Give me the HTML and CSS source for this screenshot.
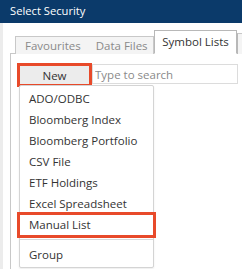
FILE: index.html
```html
<!DOCTYPE html>
<html lang="en">
<head>
  <meta charset="UTF-8">
  <title>Select Security</title>
  <link rel="stylesheet" href="styles.css">
</head>
<body>
  <div class="header">Select Security</div>
  <div class="main">
    <div class="tabs">
      <div class="tab-group">
        <span class="tab">Favourites</span>
        <span class="sep"></span>
        <span class="tab">Data Files</span>
      </div>
      <div class="tab active">Symbol Lists</div>
      <div class="tab-rest"></div>
    </div>
    <div class="panel">
      <div class="toolbar">
        <button class="new-btn">New</button>
        <input class="search" type="text" placeholder="Type to search">
      </div>
      <ul class="menu">
        <li>ADO/ODBC</li>
        <li>Bloomberg Index</li>
        <li>Bloomberg Portfolio</li>
        <li>CSV File</li>
        <li>ETF Holdings</li>
        <li>Excel Spreadsheet</li>
        <li class="marked">Manual List</li>
        <li class="divider"></li>
        <li>Group</li>
      </ul>
    </div>
  </div>
</body>
</html>
```

FILE: styles.css
```css
html, body {
  height: 269px;
  overflow: hidden;
}
body {
  margin: 0;
  font-family: "Open Sans", "Noto Sans", sans-serif;
  font-size: 11.5px;
  color: #333;
  background: #fff;
}
.header {
  background: #0b3a6a;
  color: #fff;
  height: 23px;
  line-height: 22px;
  padding-left: 10px;
  font-size: 11.2px;
  white-space: nowrap;
}
.main {
  box-sizing: border-box;
  border-left: 3px solid #ececec;
  height: 246px;
  padding-left: 7px;
  padding-top: 7px;
}
.tabs {
  display: flex;
  align-items: flex-end;
  margin-left: 5px;
  height: 24px;
  margin-bottom: -1px;
  position: relative;
  z-index: 1;
}
.tab-group {
  display: flex;
  align-items: center;
  background: #f4f4f4;
  border: 1px solid #c8c8c8;
  border-bottom: none;
  height: 17px;
  width: 137px;
  color: #8a8a8a;
  white-space: nowrap;
}
.tab-group .tab {
  padding: 0 6px 0 9px;
}
.sep {
  width: 1px;
  height: 13px;
  background: #c4c4c4;
}
.tab.active {
  background: #fff;
  border: 1px solid #b8b8b8;
  border-bottom: 1px solid #fff;
  height: 22px;
  line-height: 22px;
  width: 81px;
  text-align: center;
  white-space: nowrap;
}
.tab-rest {
  flex: 1;
  height: 20px;
  background: #f4f4f4;
  border-top: 1px solid #c8c8c8;
  border-left: 1px solid #b8b8b8;
}
.panel {
  position: relative;
  box-sizing: border-box;
  border: 1px solid #c8c8c8;
  border-right: none;
  border-bottom: none;
  height: 216px;
  padding: 9px 0 0 6px;
}
.toolbar {
  display: flex;
  align-items: flex-start;
}
.new-btn {
  width: 75px;
  height: 24px;
  box-sizing: border-box;
  border: 3px solid #e84a2a;
  background: #ececec;
  font-family: inherit;
  font-size: 11.5px;
  color: #333;
  padding: 0;
}
.search {
  width: 146px;
  height: 20px;
  box-sizing: border-box;
  margin-top: 1px;
  border: 1px solid #dcdcdc;
  padding: 0 2px;
  font-family: inherit;
  font-size: 11.5px;
}
.search::placeholder {
  color: #8a8a8a;
}
.menu {
  position: absolute;
  left: 8px;
  top: 31px;
  width: 133px;
  margin: 0;
  padding: 2px 0 2px;
  list-style: none;
  background: #fff;
  border: 1px solid #d4d4d4;
  border-radius: 2px;
  box-shadow: 0 1px 2px rgba(0,0,0,0.08);
}
.menu li {
  height: 21px;
  line-height: 21px;
  padding-left: 9px;
}
.menu li.marked {
  outline: 3px solid #e84a2a;
  outline-offset: 0;
  height: 20px;
  line-height: 19px;
  margin: 1px 0 0;
}
.menu li.divider {
  height: 0;
  border-top: 1px solid #d8d8d8;
  margin: 4px 0 4px;
}
```
